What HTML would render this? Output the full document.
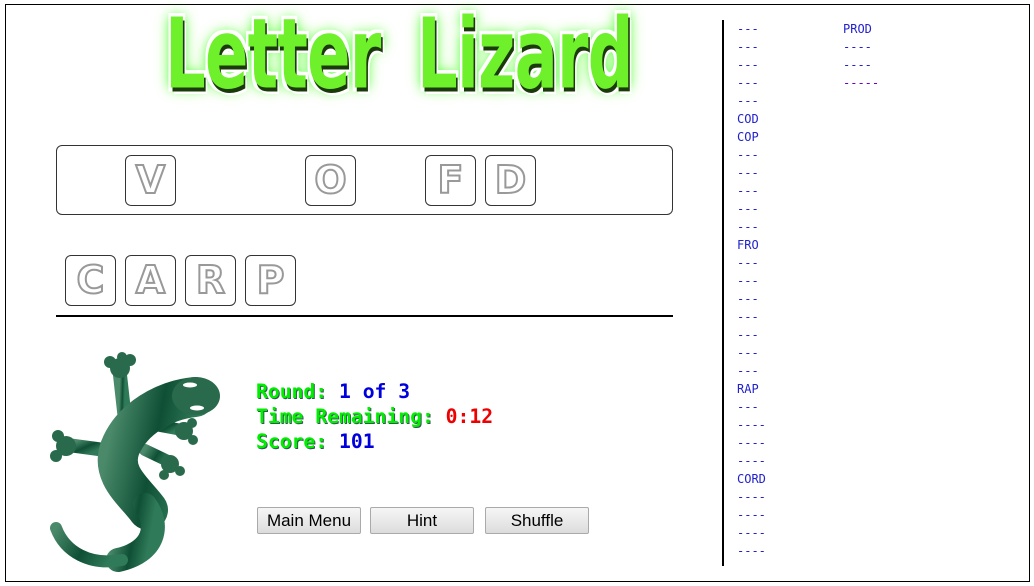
<!DOCTYPE html>
<html><head><meta charset="utf-8"><style>
html,body{margin:0;padding:0;background:#fff;width:1034px;height:586px;overflow:hidden}
.frame{position:absolute;left:5px;top:4px;width:1023px;height:576px;border:1px solid #000}
.abs{position:absolute}
.title{position:absolute;top:6px;font:bold 80px/1 "DejaVu Sans","Liberation Sans",sans-serif;color:#6ef02a;letter-spacing:-1px;white-space:nowrap;
 transform-origin:0 0;transform:scale(0.8,1.22);
 text-shadow:2px 3px 0 #1a3a0a,-3px -3px 0 #fff,3px -3px 0 #fff,-3px 3px 0 #fff,4px 5px 0 #fff,0 0 10px #5f5,0 0 16px #7f4;}
.box{position:absolute;left:56px;top:145px;width:615px;height:68px;border:1px solid #333;border-radius:6px}
.tile{position:absolute;width:49px;height:49px;border:1px solid #333;border-radius:6px;text-align:center;
 font:bold 38px/49px "DejaVu Sans","Liberation Sans",sans-serif;color:#fff;-webkit-text-stroke:2px #999}
.hr{position:absolute;left:56px;top:315px;width:617px;height:2px;background:#000}
.stats{position:absolute;left:256px;top:379px;font:bold 19.7px/25px "DejaVu Sans Mono","Liberation Mono",monospace;white-space:pre}
.g{color:#00ee00;text-shadow:1px 1px 0 #355}
.b{color:#0000dd}.r{color:#ee0000}
.btn{position:absolute;top:507px;width:104px;height:27px;border:1px solid #aaa;border-radius:2px;background:linear-gradient(#f6f6f6,#dcdcdc);
 font:17px/26px "Liberation Sans",sans-serif;text-align:center;color:#000;box-sizing:border-box}
.vl{position:absolute;left:722px;top:20px;width:2px;height:546px;background:#000}
.col{position:absolute;top:20px;font:12px/18px "DejaVu Sans Mono","Liberation Mono",monospace;color:#2222cc;white-space:pre}
</style></head><body>
<div class="frame"></div>
<div class="title" style="left:165px">Letter</div>
<div class="title" style="left:417px">Lizard</div>
<div class="box"></div>
<div class="tile" style="left:125px;top:155px">V</div>
<div class="tile" style="left:305px;top:155px">O</div>
<div class="tile" style="left:425px;top:155px">F</div>
<div class="tile" style="left:485px;top:155px">D</div>
<div class="tile" style="left:65px;top:255px">C</div>
<div class="tile" style="left:125px;top:255px">A</div>
<div class="tile" style="left:185px;top:255px">R</div>
<div class="tile" style="left:245px;top:255px">P</div>
<div class="hr"></div>
<svg class="abs" style="left:0;top:0" width="240" height="586" viewBox="0 0 240 586">
<defs><linearGradient id="lg" x1="0" y1="0" x2="1" y2="0.3"><stop offset="0" stop-color="#4a8a6a"/><stop offset="0.55" stop-color="#0f4f35"/><stop offset="1" stop-color="#2f7a58"/></linearGradient></defs>
<g fill="none" stroke="url(#lg)" stroke-linecap="round" stroke-linejoin="round">
<path d="M120 375 L125 420" stroke-width="14"/>
<path d="M105 450 L68 445" stroke-width="14"/>
<path d="M155 425 L182 430" stroke-width="12"/>
<path d="M145 450 L170 462" stroke-width="12"/>
<path d="M195 397 C165 400 132 418 120 448 C110 475 135 492 148 510" stroke-width="40"/>
<path d="M145 505 C160 525 155 552 118 560" stroke-width="24"/>
<path d="M122 560 C90 566 65 552 56 528" stroke-width="12"/>
</g>
<g fill="#2a6a4c">
<ellipse cx="196" cy="396" rx="24" ry="19"/>
<circle cx="120" cy="368" r="10"/><circle cx="110" cy="362" r="6"/><circle cx="130" cy="360" r="6"/><circle cx="122" cy="357" r="5"/>
<circle cx="66" cy="446" r="10"/><circle cx="58" cy="436" r="6"/><circle cx="56" cy="456" r="6"/>
<circle cx="184" cy="431" r="9"/><circle cx="192" cy="423" r="5"/><circle cx="193" cy="440" r="5"/>
<circle cx="170" cy="464" r="9"/><circle cx="180" cy="471" r="5"/><circle cx="164" cy="475" r="5"/>
</g>
<ellipse cx="190" cy="385" rx="7" ry="2.5" fill="#fff"/>
<ellipse cx="197" cy="408" rx="7" ry="2.5" fill="#fff"/>
</svg>
<div class="stats"><span class="g">Round: </span><span class="b">1 of 3</span>
<span class="g">Time Remaining: </span><span class="r">0:12</span>
<span class="g">Score: </span><span class="b">101</span></div>
<div class="btn" style="left:257px">Main Menu</div>
<div class="btn" style="left:370px">Hint</div>
<div class="btn" style="left:485px">Shuffle</div>
<div class="vl"></div>
<div class="col" style="left:737px">---
---
---
---
---
COD
COP
---
---
---
---
---
FRO
---
---
---
---
---
---
---
RAP
---
----
----
----
CORD
----
----
----
----</div>
<div class="col" style="left:843px">PROD
----
----
<span style="color:#6600cc">-----</span></div>
</body></html>
